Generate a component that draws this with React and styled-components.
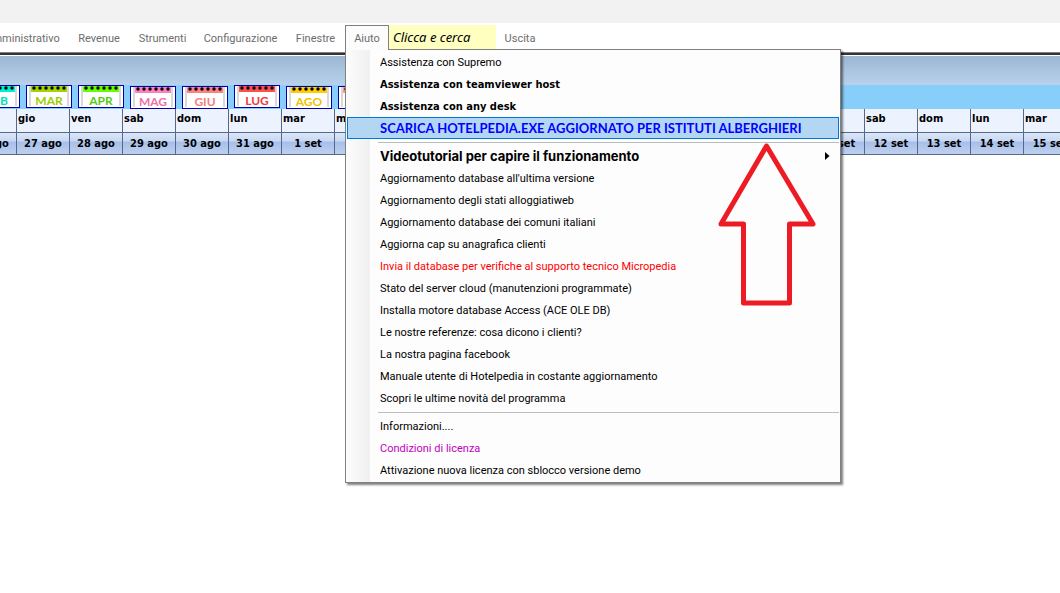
import React, { useState } from 'react'
import styled, { createGlobalStyle } from 'styled-components'

const GlobalStyle = createGlobalStyle`
  * {
    box-sizing: border-box;
  }
  body {
    margin: 0;
    background: #fff;
    overflow: hidden;
  }
`
const regular = `Roboto, sans-serif`
const strong = `'DejaVu Sans Condensed', 'DejaVu Sans', sans-serif`

const Page = styled.div`
  width: 100%;
  min-height: 100vh;
  overflow: hidden;
  background: #fff;
  font-family: ${regular};
  font-size: 11px;
  color: #000;
`
const TitleStrip = styled.header`
  height: 23px;
  background: #f2f2f2;
`
const MenuBar = styled.nav`
  display: flex;
  align-items: flex-start;
  height: 29px;
  padding-top: 2px;
  margin-left: -23px;
`
const MenuEntry = styled.div`
  position: relative;
  flex-shrink: 0;
`
const MenuButton = styled.button`
  display: block;
  position: relative;
  z-index: ${({ $open }) => ($open ? 3 : 0)};
  flex-shrink: 0;
  width: ${({ $width }) => $width}px;
  height: 25px;
  padding: 1px 0 0;
  border: 1px solid ${({ $open }) => ($open ? '#808080' : 'transparent')};
  border-bottom: 0;
  background: ${({ $open }) => ($open ? '#fcfcfc' : 'transparent')};
  font-family: ${regular};
  font-size: 11px;
  line-height: 24px;
  text-align: center;
  white-space: nowrap;
  color: #6d6d6d;
`
const Search = styled.input`
  flex-shrink: 0;
  width: 107px;
  height: 24px;
  margin-right: 1px;
  padding: 0 4px;
  border: 0;
  outline: 0;
  background: #ffffc0;
  font-family: 'Noto Sans', sans-serif;
  font-size: 13px;
  font-style: italic;
  color: #000;
`
const Dropdown = styled.ul`
  position: absolute;
  z-index: 2;
  top: 24px;
  left: 0;
  width: 496px;
  margin: 0;
  padding: 1px;
  list-style: none;
  border: 1px solid #808080;
  background: linear-gradient(90deg, #fcfcfc 0, #f0f0f0 24px, #fdfdfd 24px);
  box-shadow: 2px 2px 2px rgba(0, 0, 0, 0.5);
`
const Command = styled.button`
  display: flex;
  align-items: center;
  justify-content: space-between;
  width: 100%;
  height: 22px;
  padding: 2px 8px 0 32px;
  border: 1px solid ${({ $active }) => ($active ? '#0078d7' : 'transparent')};
  background: ${({ $active }) => ($active ? '#b3d7f3' : 'transparent')};
  font-family: ${({ $bold }) => ($bold ? strong : regular)};
  font-size: 11px;
  font-weight: ${({ $bold }) => ($bold ? 700 : 400)};
  line-height: 18px;
  text-align: left;
  white-space: nowrap;
  color: ${({ $color }) => $color || '#000'};
`
const DownloadCommand = styled(Command)`
  padding-top: 0;
  font-family: Lato, sans-serif;
  font-size: 13px;
`
const TutorialCommand = styled(Command)`
  padding-top: 0;
  font-family: Inter, sans-serif;
  font-size: 13px;
`
const Separator = styled.li`
  height: 6px;
  padding: 3px 0 2px 31px;

  &::before {
    content: '';
    display: block;
    height: 1px;
    background: #bdbdbd;
  }
`
const Pointer = styled.li`
  position: absolute;
  top: 92px;
  left: 372px;
  width: 98px;
  height: 166px;
  pointer-events: none;
`
const Frame = styled.div`
  height: 33px;
  border-top: 1px solid #808080;
  background: linear-gradient(#99b4d1, #b9d1ea);
  box-shadow: inset 0 2px 0 #333, inset 0 3px 0 #fff;
`
const Months = styled.div`
  display: flex;
  align-items: flex-start;
  gap: 6px;
  height: 24px;
  margin-left: -26px;
  background: #87cefa;
`
const MonthButton = styled.button`
  display: flex;
  flex-direction: column;
  align-items: center;
  flex-shrink: 0;
  width: 46px;
  height: 23px;
  margin-top: ${({ $low }) => ($low ? 1 : 0)}px;
  padding: 0;
  border: 1px solid #0000b0;
  background: #fff;
  font-family: Lato, sans-serif;
  font-size: 12px;
  font-weight: 700;
  line-height: 16px;
  color: ${({ $color }) => $color};

  svg {
    flex-shrink: 0;
    margin-bottom: -14px;
  }
`
const Days = styled.table`
  width: 1113px;
  margin-left: -36px;
  border-collapse: separate;
  border-spacing: 0;
  table-layout: fixed;
  font-family: ${strong};
  font-weight: 700;
`
const DayName = styled.th`
  height: 24px;
  padding: 0 0 4px 1px;
  border-right: 1px solid #56698a;
  border-bottom: 1px solid #56698a;
  background: #ecf3ff;
  line-height: 14px;
  text-align: left;
`
const DayDate = styled.td`
  height: 22px;
  padding: 0;
  border-right: 1px solid #56698a;
  border-bottom: 1px solid #56698a;
  background: linear-gradient(#dbe6f7 0, #c8d8f2 8px, #a6bfe9 9px, #bfd0ef 100%);
  line-height: 14px;
  text-align: center;
  white-space: nowrap;
`

const months = [
  { name: 'FEB', color: '#00e0c0', band: '#00f0d0' },
  { name: 'MAR', color: '#9fcc00', band: '#a6d400' },
  { name: 'APR', color: '#55cc11', band: '#66ff00' },
  { name: 'MAG', color: '#f070a8', band: '#ff80b8', low: true },
  { name: 'GIU', color: '#f77c7c', band: '#ff8080', low: true },
  { name: 'LUG', color: '#ee3c3c', band: '#ff5050' },
  { name: 'AGO', color: '#f2c100', band: '#ffcc00', low: true },
  { name: 'SET', color: '#f09050', band: '#ffa060', low: true },
]

const weekdays = ['mer', 'gio', 'ven', 'sab', 'dom', 'lun', 'mar']
const days = Array.from({ length: 21 }, (_, i) => ({
  name: weekdays[i % 7],
  date: i < 6 ? `${26 + i} ago` : `${i - 5} set`,
}))

const helpCommands = [
  { text: 'Assistenza con Supremo' },
  { text: 'Assistenza con teamviewer host', bold: true },
  { text: 'Assistenza con any desk', bold: true },
  {
    text: 'SCARICA HOTELPEDIA.EXE AGGIORNATO PER ISTITUTI ALBERGHIERI',
    as: DownloadCommand,
    bold: true,
    active: true,
    color: '#0000ff',
  },
  null,
  {
    text: 'Videotutorial per capire il funzionamento',
    as: TutorialCommand,
    bold: true,
    submenu: true,
  },
  { text: "Aggiornamento database all'ultima versione" },
  { text: 'Aggiornamento degli stati alloggiatiweb' },
  { text: 'Aggiornamento database dei comuni italiani' },
  { text: 'Aggiorna cap su anagrafica clienti' },
  { text: 'Invia il database per verifiche al supporto tecnico Micropedia', color: '#ff0000' },
  { text: 'Stato del server cloud (manutenzioni programmate)' },
  { text: 'Installa motore database Access (ACE OLE DB)' },
  { text: 'Le nostre referenze: cosa dicono i clienti?' },
  { text: 'La nostra pagina facebook' },
  { text: 'Manuale utente di Hotelpedia in costante aggiornamento' },
  { text: 'Scopri le ultime novità del programma' },
  null,
  { text: 'Informazioni....' },
  { text: 'Condizioni di licenza', color: '#c000c0' },
  { text: 'Attivazione nuova licenza con sblocco versione demo' },
]

const Month = ({ name, color, band, low }) => (
  <MonthButton $color={color} $low={low}>
    <svg width="44" height="21" viewBox="0 0 44 21">
      <path d="M3 0V20M41 0V20" fill="none" stroke="#d8d8d8" strokeWidth="2" />
      <path d="M4 0H40V6H4z" fill={band} />
      {[6, 12, 18, 24, 30, 36].map((x) => (
        <circle key={x} cx={x + 1} cy="2" r="1.7" fill="#000" />
      ))}
    </svg>
    {name}
  </MonthButton>
)

const HelpMenu = () => (
  <Dropdown>
    {helpCommands.map((command, i) => {
      if (!command) return <Separator key={i} />
      const { text, as: Item = Command, bold, active, color, submenu } = command
      return (
        <li key={i}>
          <Item $bold={bold} $active={active} $color={color}>
            {text}
            {submenu && (
              <svg width="5" height="8" viewBox="0 0 5 8">
                <path d="M0 0L4.500 4L0 8z" fill="#000" />
              </svg>
            )}
          </Item>
        </li>
      )
    })}
    <Pointer aria-hidden="true">
      <svg width="98" height="166" viewBox="0 0 98 166">
        <path
          d="M48.500 4L95 82H71.500V161H25.500V82H3Z"
          fill="none"
          stroke="#ed1c24"
          strokeWidth="5"
          strokeLinejoin="round"
        />
      </svg>
    </Pointer>
  </Dropdown>
)

export default function App() {
  const [search, setSearch] = useState('Clicca e cerca')

  return (
    <>
      <GlobalStyle />
      <Page>
        <TitleStrip />
        <MenuBar>
          <MenuButton $width={91}>Amministrativo</MenuButton>
          <MenuButton $width={62}>Revenue</MenuButton>
          <MenuButton $width={65}>Strumenti</MenuButton>
          <MenuButton $width={91}>Configurazione</MenuButton>
          <MenuButton $width={59}>Finestre</MenuButton>
          <MenuEntry>
            <MenuButton $width={44} $open>
              Aiuto
            </MenuButton>
            <HelpMenu />
          </MenuEntry>
          <Search
            aria-label="Cerca"
            value={search}
            onChange={(e) => setSearch(e.target.value)}
          />
          <MenuButton $width={46}>Uscita</MenuButton>
        </MenuBar>
        <Frame />
        <Months>
          {months.map((month) => (
            <Month key={month.name} {...month} />
          ))}
        </Months>
        <Days>
          <thead>
            <tr>
              {days.map(({ name, date }) => (
                <DayName key={date}>{name}</DayName>
              ))}
            </tr>
          </thead>
          <tbody>
            <tr>
              {days.map(({ date }) => (
                <DayDate key={date}>{date}</DayDate>
              ))}
            </tr>
          </tbody>
        </Days>
      </Page>
    </>
  )
}
